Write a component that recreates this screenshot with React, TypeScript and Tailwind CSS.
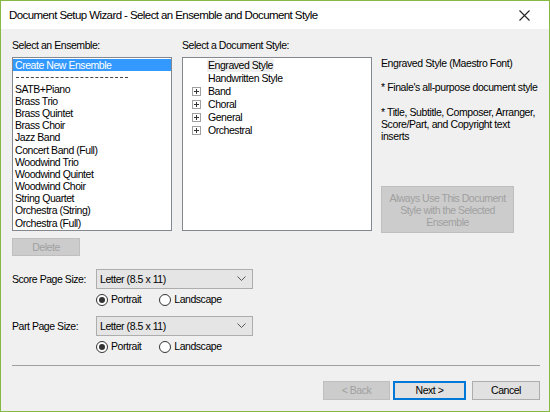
import React from "react"

// Document Setup Wizard dialog (Windows 10 look)

const ensembles = [
  "SATB+Piano",
  "Brass Trio",
  "Brass Quintet",
  "Brass Choir",
  "Jazz Band",
  "Concert Band (Full)",
  "Woodwind Trio",
  "Woodwind Quintet",
  "Woodwind Choir",
  "String Quartet",
  "Orchestra (String)",
  "Orchestra (Full)",
]

const styles = [
  { name: "Engraved Style", folder: false },
  { name: "Handwritten Style", folder: false },
  { name: "Band", folder: true },
  { name: "Choral", folder: true },
  { name: "General", folder: true },
  { name: "Orchestral", folder: true },
]

function PlusBox() {
  return (
    <span className="flex h-[9px] w-[9px] items-center justify-center border border-[#a0a0a0] bg-white">
      <svg width="5" height="5" viewBox="0 0 5 5">
        <path d="M0 2.5H5M2.5 0V5" stroke="#333" strokeWidth="1" />
      </svg>
    </span>
  )
}

function Radio({ checked, label }: { checked?: boolean; label: string }) {
  return (
    <label className="flex items-center gap-[3px]">
      <span className="flex h-[12px] w-[12px] items-center justify-center rounded-full border border-[#333] bg-white">
        {checked && <span className="h-[6px] w-[6px] rounded-full bg-[#333]" />}
      </span>
      <span>{label}</span>
    </label>
  )
}

function PageSize({ label }: { label: string }) {
  return (
    <div className="flex flex-col">
      <div className="flex items-center">
        <span className="w-[84px]">{label}</span>
        <div className="flex h-[20px] w-[157px] items-center justify-between border border-[#adadad] bg-[#e5e5e5] pl-[3px] pr-[6px]">
          <span>Letter (8.5 x 11)</span>
          <svg width="9" height="6" viewBox="0 0 9 6">
            <path d="M0.5 0.5L4.5 4.5L8.5 0.5" fill="none" stroke="#555" strokeWidth="1" />
          </svg>
        </div>
      </div>
      <div className="ml-[84px] mt-[4px] flex gap-[18px]">
        <Radio checked label="Portrait" />
        <Radio label="Landscape" />
      </div>
    </div>
  )
}

export default function App() {
  return (
    <div
      className="flex h-[412px] w-[550px] flex-col border border-[#86b944] bg-[#f0f0f0] text-[10.5px] leading-[13px] tracking-[-0.45px] text-black"
      style={{ fontFamily: '"Liberation Sans", Arial, sans-serif' }}
    >
      {/* title bar */}
      <div className="flex h-[28px] shrink-0 items-center justify-between bg-white pl-[8px] pr-[19px] text-[11.5px] tracking-[-0.58px]">
        <span>Document Setup Wizard - Select an Ensemble and Document Style</span>
        <svg width="11" height="11" viewBox="0 0 11 11">
          <path d="M0.5 0.5L10.5 10.5M10.5 0.5L0.5 10.5" stroke="#222" strokeWidth="1.1" />
        </svg>
      </div>

      <div className="flex flex-1 flex-col pl-[11px] pr-[9px] pt-[10px]">
        <div className="flex">
          {/* ensemble list */}
          <div className="flex w-[160px] flex-col">
            <span>Select an Ensemble:</span>
            <div className="mt-[5px] h-[174px] border border-[#828790] bg-white pt-px">
              <div className="flex h-[12px] items-center bg-[#3399ff] px-[2px] text-white">Create New Ensemble</div>
              <div className="flex h-[12px] items-center px-[3px]">
                <span className="h-[1px] w-[112px] border-t border-dashed border-[#444]" />
              </div>
              {ensembles.map((e) => (
                <div key={e} className="flex h-[12.2px] items-center px-[2px]">
                  {e}
                </div>
              ))}
            </div>
            <button className="mt-[7px] h-[18px] w-[68px] border border-[#bfbfbf] bg-[#cccccc] text-[#a0a0a0]">
              Delete
            </button>
          </div>

          {/* document style tree */}
          <div className="ml-[10px] flex w-[190px] flex-col">
            <span>Select a Document Style:</span>
            <div className="mt-[5px] h-[174px] border border-[#828790] bg-white pt-[1px]">
              {styles.map((s, i) => (
                <div key={s.name} className="flex h-[13px] items-center pl-[9px]">
                  <span className="flex w-[15px] justify-start">{s.folder && <PlusBox />}</span>
                  <span className={i === 0 ? "bg-[#f0f0f0] px-[1px]" : "px-[1px]"}>{s.name}</span>
                </div>
              ))}
            </div>
          </div>

          {/* description */}
          <div className="ml-[9px] flex flex-1 flex-col whitespace-nowrap pt-[18px] leading-[12px] tracking-[-0.4px]">
            <p>Engraved Style (Maestro Font)</p>
            <p className="mt-[12px]">* Finale&apos;s all-purpose document style</p>
            <p className="mt-[13px]">
              * Title, Subtitle, Composer, Arranger,
              <br />
              Score/Part, and Copyright text
              <br />
              inserts
            </p>
            <button className="mt-[44px] flex h-[47px] w-[133px] flex-col items-center justify-center border border-[#bfbfbf] bg-[#cccccc] leading-[12px] tracking-[-0.5px] text-[#a0a0a0]">
              <span>Always Use This Document</span>
              <span>Style with the Selected</span>
              <span>Ensemble</span>
            </button>
          </div>
        </div>

        <div className="mt-[13px] flex flex-col gap-[10px]">
          <PageSize label="Score Page Size:" />
          <PageSize label="Part Page Size:" />
        </div>

        <div className="mt-[12px] border-t border-[#a0a0a0]" />

        <div className="mt-[15px] flex justify-end">
          <button className="h-[19px] w-[67px] border border-[#bfbfbf] bg-[#cccccc] text-[#a0a0a0]">&lt; Back</button>
          <button className="ml-[3px] h-[19px] w-[73px] border-2 border-[#0078d7] bg-[#e1e1e1]">Next &gt;</button>
          <button className="ml-[6px] h-[19px] w-[68px] border border-[#adadad] bg-[#e1e1e1]">Cancel</button>
        </div>
      </div>
    </div>
  )
}
